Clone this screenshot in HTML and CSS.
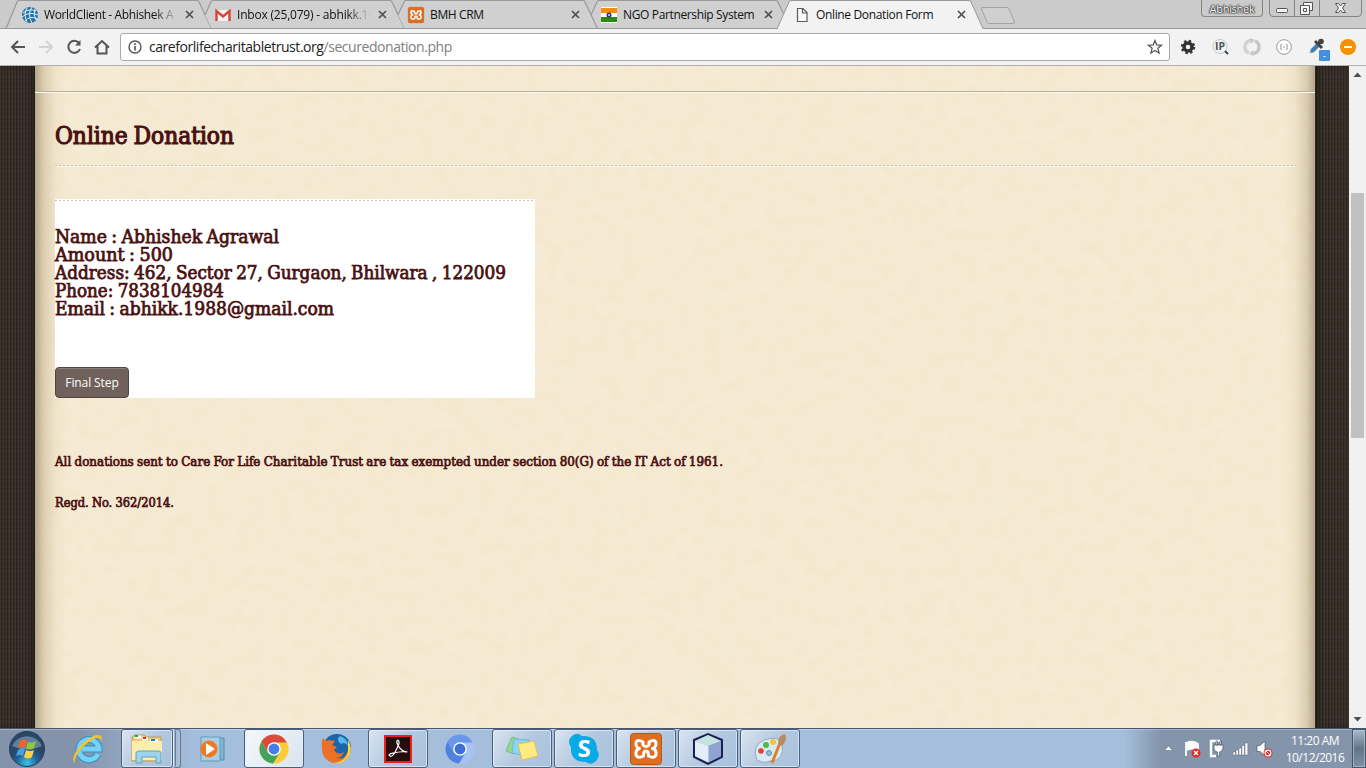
FILE: index.html
```html
<!DOCTYPE html>
<html lang="en">
<head>
<meta charset="utf-8">
<title>Online Donation Form</title>
<link rel="stylesheet" href="styles.css">
</head>
<body>
<div class="screen">
<header class="tabstrip">
  <svg class="tab-shapes" width="1366" height="29" viewBox="0 0 1366 29">
    <rect width="1366" height="29" fill="#cbcbcb"/>
    <g fill="#d0d0d0" stroke="#999" stroke-width="1.2">
      <path d="M591.500 14L597.500.5H777.500L784.500 14L778 28.500H598Z" stroke="none"/>
      <path d="M5.500 28.500Q7 27 8 24L17 2Q18 .5 19 .5H197Q198 .5 199 2L211.500 28.500"/>
      <path d="M205 15L211 2Q212 .5 213 .5H390Q391 .5 392 2L404.500 28.500H211.500"/>
      <path d="M398 15L404 2Q405 .5 406 .5H583Q584 .5 585 2L597.500 28.500H404.500"/>
      <path d="M591 15L597 2Q598 .5 599 .5H776Q777 .5 778 2L784 15" fill="none"/>
    </g>
    <path d="M0 28.500H778M983 28.500H1366" stroke="#999"/>
    <path d="M777 29L789 2Q790 .5 791 .5H969Q970 .5 971 2L983 28.500V29" fill="#f2f2f2" stroke="#999"/>
    <path d="M982 7.500H1006Q1008 7.500 1009 9L1014.500 22Q1015 23.500 1013 23.500H990Q988 23.500 987 22L981.500 9Q981 7.500 982 7.500Z" fill="#d0d0d0" stroke="#a2a2a2"/>
  </svg>
  <div class="tab t1">
    <svg width="16" height="16" viewBox="0 0 16 16"><circle cx="8" cy="8" r="8" fill="#2173a8"/><g fill="none" stroke="#e5f2fa"><path d="M1 6Q7 1 14 4M0 10Q7 4 16 8M3 14Q8 8 15 12M5 1Q1 7 5 15M10 0Q5 7 10 16M13 2Q11 8 14 13"/></g></svg>
    <span class="tab-title fade">WorldClient - Abhishek A</span>
    <svg class="close" width="9" height="9" viewBox="0 0 9 9"><path d="M1 1L8 8M8 1L1 8"/></svg>
  </div>
  <div class="tab t2">
    <svg width="16" height="16" viewBox="0 0 16 16"><path d="M1 3H15V14H1Z" fill="#f3f1ef"/><path d="M1.500 14V4L8 9.500L14.500 4V14" fill="none" stroke="#d8443a" stroke-width="2.400"/></svg>
    <span class="tab-title fade">Inbox (25,079) - abhikk.19</span>
    <svg class="close" width="9" height="9" viewBox="0 0 9 9"><path d="M1 1L8 8M8 1L1 8"/></svg>
  </div>
  <div class="tab t3">
    <svg width="16" height="16" viewBox="0 0 32 32"><use href="#xampp"/></svg>
    <span class="tab-title">BMH CRM</span>
    <svg class="close" width="9" height="9" viewBox="0 0 9 9"><path d="M1 1L8 8M8 1L1 8"/></svg>
  </div>
  <div class="tab t4">
    <svg width="16" height="16" viewBox="0 0 16 16"><rect width="16" height="16" fill="#fff"/><rect y="1" width="16" height="5" fill="#f98c0b"/><rect y="10" width="16" height="5" fill="#2c8a12"/><circle cx="8" cy="8" r="1.900" fill="#fff" stroke="#17266e" stroke-width="1.200"/><circle cx="8" cy="8" r=".7" fill="#17266e"/></svg>
    <span class="tab-title">NGO Partnership System</span>
    <svg class="close" width="9" height="9" viewBox="0 0 9 9"><path d="M1 1L8 8M8 1L1 8"/></svg>
  </div>
  <div class="tab t5">
    <svg width="16" height="16" viewBox="0 0 16 16"><path d="M3.500 1.500H9L13 5.500V14.500H3.500ZM8.500 1.500V6H13" fill="#fafafa" stroke="#5a5a5a" stroke-width="1.200"/></svg>
    <span class="tab-title">Online Donation Form</span>
    <svg class="close" width="9" height="9" viewBox="0 0 9 9"><path d="M1 1L8 8M8 1L1 8"/></svg>
  </div>
  <div class="profile">Abhishek</div>
  <svg class="window-buttons" width="94" height="18" viewBox="0 0 94 18"><path d="M.5-3V13Q.5 16.500 4 16.500H89Q92.500 16.500 92.500 13V-3M25.500 0V16M50.500 0V16" fill="none" stroke="#858585"/><g fill="#f5f5f5" stroke="#555"><rect x="7.500" y="8.500" width="11" height="4" rx="1"/><path d="M34.500 2.500H43.500V10.500H34.500Z"/><path d="M31.500 5.500H40.500V14.500H31.500Z"/><path d="M34.500 8.500H37.500V11.500H34.500Z"/><path d="M66.500 3.500H69.500L71.500 6L73.500 3.500H76.500L73.500 8L76.500 12.500H73.500L71.500 10L69.500 12.500H66.500L69.500 8Z"/></g></svg>
</header>
<nav class="toolbar">
  <svg class="nav-icons" width="110" height="20" viewBox="0 0 110 20">
    <g fill="none" stroke="#555" stroke-width="2">
      <path d="M25 10H12M18 4L12 10L18 16"/>
      <path d="M39 10H52M46 4L52 10L46 16" stroke="#d2d2d2"/>
      <path d="M79 6A6 6 0 1 0 80 12"/><path d="M80.500 3V8.500H75Z" fill="#555" stroke="none"/>
      <path d="M95 10.500L102 4L109 10.500M97.500 9V16.500H106.500V9"/>
    </g>
  </svg>
  <div class="address">
    <svg width="14" height="14" viewBox="0 0 14 14"><circle cx="7" cy="7" r="6" fill="none" stroke="#555" stroke-width="1.400"/><path d="M7 6V10.500M7 3.200V4.900" stroke="#555" stroke-width="1.700"/></svg>
    <span class="url">careforlifecharitabletrust.org<span class="path">/securedonation.php</span></span>
    <svg class="star" width="16" height="16" viewBox="0 0 16 16"><path d="M8 1.500L9.800 6L14.500 6.300L10.900 9.300L12.100 14L8 11.400L3.900 14L5.100 9.300L1.500 6.300L6.200 6Z" fill="none" stroke="#5a5a5a" stroke-width="1.300"/></svg>
  </div>
  <svg class="extensions" width="186" height="26" viewBox="0 0 186 26">
    <circle cx="8" cy="11" r="4" fill="none" stroke="#333" stroke-width="3.500"/><circle cx="8" cy="11" r="6.100" fill="none" stroke="#333" stroke-width="2.200" stroke-dasharray="2.400 2.391"/>
    <circle cx="40" cy="10.500" r="7" fill="#f1f4f5" stroke="#bccbd0"/><path d="M45 15L48 18" stroke="#444" stroke-width="2"/><text x="40" y="14" text-anchor="middle" class="ip">IP</text>
    <g fill="none" stroke-width="3.400"><path d="M69 17A6.500 6.500 0 0 1 71 4.500" stroke="#d2d2d2"/><path d="M75 5A6.500 6.500 0 0 1 73 17.500" stroke="#c4c4c4"/></g><path d="M70 2L75 4L71 8ZM74 20L69 18L73 14Z" fill="#c9c9c9"/>
    <circle cx="104" cy="11" r="7.300" fill="#fff" stroke="#999"/><path d="M102 8Q100 8 101 11Q100 14 102 14M106 8Q108 8 107 11Q108 14 106 14" fill="none" stroke="#999"/><path d="M103 11H105" stroke="#999"/>
    <path d="M130 17L131 13L137 7L140 10L134 16Z" fill="#3981ba" stroke="#99aab4"/><path d="M135 5L142 12M138 8L141 5" stroke="#404447" stroke-width="3"/><circle cx="141" cy="5.500" r="2.800" fill="#404447"/>
    <rect x="139" y="14" width="11" height="11" rx="1" fill="#3f91df"/><path d="M143.500 20.500H145.500" stroke="#fff"/>
    <circle cx="168" cy="11" r="8" fill="#f29200"/><path d="M164 11H172" stroke="#fff" stroke-width="2"/>
  </svg>
</nav>
<main class="viewport">
  <div class="weave"></div>
  <section class="paper">
    <svg class="grain" width="1280" height="662"><defs><filter id="fiber" x="0" y="0" width="100%" height="100%"><feTurbulence type="fractalNoise" baseFrequency=".07 .08" numOctaves="5" seed="7"/><feColorMatrix values="0 0 0 0 .90  0 0 0 0 .76  0 0 0 0 .53  1.500 0 0 0 -.57"/></filter></defs><rect width="1280" height="662" filter="url(#fiber)"/></svg>
    <div class="content">
      <div class="rule"></div>
      <h1><svg width="480" height="32"><text x="0" y="25" textLength="179" lengthAdjust="spacingAndGlyphs">Online Donation</text></svg></h1>
      <div class="dashes"></div>
      <div class="card">
        <div class="dashes"></div>
        <svg class="details" width="480" height="100">
          <text x="0" y="18" textLength="224" lengthAdjust="spacingAndGlyphs">Name : Abhishek Agrawal</text>
          <text x="0" y="36" textLength="118" lengthAdjust="spacingAndGlyphs">Amount : 500</text>
          <text x="0" y="54" textLength="451" lengthAdjust="spacingAndGlyphs">Address: 462, Sector 27, Gurgaon, Bhilwara , 122009</text>
          <text x="0" y="72" textLength="169" lengthAdjust="spacingAndGlyphs">Phone: 7838104984</text>
          <text x="0" y="90" textLength="279" lengthAdjust="spacingAndGlyphs">Email : abhikk.1988@gmail.com</text>
        </svg>
        <button class="final">Final Step</button>
      </div>
      <svg class="notes" width="700" height="64">
        <text x="0" y="16" textLength="668" lengthAdjust="spacingAndGlyphs">All donations sent to Care For Life Charitable Trust are tax exempted under section 80(G) of the IT Act of 1961.</text>
        <text x="0" y="57" textLength="119" lengthAdjust="spacingAndGlyphs">Regd. No. 362/2014.</text>
      </svg>
    </div>
  </section>
  <div class="weave"></div>
  <aside class="scrollbar"><svg width="17" height="17"><path d="M4.500 11L8.500 6.500L12.500 11Z" fill="#505050"/></svg><div class="thumb"></div><svg width="17" height="17"><path d="M4.500 6L8.500 10.500L12.500 6Z" fill="#505050"/></svg></aside>
</main>
<footer class="taskbar">
  <div class="slot start"><svg width="38" height="38" viewBox="0 0 38 38"><defs><radialGradient id="orb" cy=".9"><stop offset="0" stop-color="#39c7ee"/><stop offset=".6" stop-color="#1f6296"/><stop offset="1" stop-color="#294767"/></radialGradient></defs><circle cx="19" cy="19" r="17.500" fill="url(#orb)" stroke="#273f5b"/><path d="M4 16A16 15 0 0 1 34 16Q19 23 4 16Z" fill="#bfd4e5" opacity=".4"/><path d="M12 11Q16 8 19 11L17 18Q14 16 10 18Z" fill="#f0632c"/><path d="M20 12Q24 14 28 11L26 18Q22 21 18 18Z" fill="#92c744"/><path d="M10 20Q14 17 17 19L15 26Q12 24 8 26Z" fill="#4c9fe0"/><path d="M18 20Q22 22 26 20L24 27Q20 30 16 27Z" fill="#ffd044"/></svg></div>
  <div class="slot ie"><svg width="32" height="32" viewBox="0 0 32 32"><path d="M26 21A10 10 0 1 1 27 16H10" fill="none" stroke="#348fc8" stroke-width="7"/><path d="M26 21A10 10 0 1 1 27 16H10" fill="none" stroke="#75d4f6" stroke-width="5"/><path d="M3 30C-4 25 13 4 25 2Q32 1 29 9Q29 4 24 5C14 8 1 24 3 30Z" fill="#f5c52d"/></svg></div>
  <div class="slot btn explorer"><svg width="34" height="32" viewBox="0 0 34 32"><path d="M2 4L5 2H14L16 4H31V28H2Z" fill="#eccb78" stroke="#c59c4f"/><path d="M2 8H32V27H2Z" fill="#faedad"/><path d="M5 4H11M12 6H18M20 8H28" stroke="#fff" stroke-width="3"/><path d="M5 3H8" stroke="#15a84b" stroke-width="2"/><path d="M13 5H16" stroke="#d63a21" stroke-width="2"/><path d="M21 7H25" stroke="#1983cf" stroke-width="2"/><path d="M6 30V20Q6 18 9 18H28Q31 18 31 20V30H26V24H12V30Z" fill="#9bd4ed" stroke="#60a3c5"/></svg></div>
  <div class="stack"></div>
  <div class="slot wmp"><svg width="32" height="32" viewBox="0 0 32 32"><path d="M9 5H27V27H9Z" fill="#83b4d4" stroke="#4e8fb3"/><path d="M4 4H23V28H4Z" fill="#a9cee2" stroke="#5f9dbf"/><circle cx="12" cy="16" r="8.500" fill="#f57821"/><path d="M9 10V22L18 16Z" fill="#fff"/></svg></div>
  <div class="slot btn bright"><svg width="30" height="30" viewBox="0 0 32 32"><circle cx="16" cy="16" r="15.500" fill="#ffcc37"/><path d="M16 .5A15.500 15.500 0 0 0 2.600 8.200L9.500 20L16 9H29.500A15.500 15.500 0 0 0 16 .5Z" fill="#dc4a3d"/><path d="M2.600 8.200A15.500 15.500 0 0 0 15 31.500L22 20L9.500 20Z" fill="#43a35c"/><circle cx="16" cy="16" r="7.300" fill="#fff"/><circle cx="16" cy="16" r="5.800" fill="#447fe8"/></svg></div>
  <div class="slot firefox"><svg width="32" height="32" viewBox="0 0 32 32"><circle cx="17" cy="15" r="14" fill="#1967a9"/><path d="M20 3Q27 5 28 13Q25 8 21 11Q15 6 20 3Z" fill="#56b9e8"/><path d="M3 5Q5 9 9 7L15 8L12 12L17 14L14 17Q18 23 24 19Q21 27 15 24Q24 29 28 18Q30 12 28 7Q33 15 29 23Q23 32 13 30Q1 26 2 14Q1 9 3 5Z" fill="#ed7026"/><path d="M28 7Q33 15 29 23Q23 32 13 30Q26 29 28 18Z" fill="#ffd33c"/></svg></div>
  <div class="slot btn"><svg width="28" height="28" viewBox="0 0 28 28"><rect x="1" y="1" width="26" height="26" fill="#250d0d" stroke="#f21e12" stroke-width="2"/><path d="M6 21C2 19 12 17 21 16.500C27 17 17 19 13 8C12 3 17 5 14 11Q9 23 6 21Z" fill="none" stroke="#fff" stroke-width="1.200"/></svg></div>
  <div class="slot chromium"><svg width="30" height="30" viewBox="0 0 32 32"><circle cx="16" cy="16" r="15.500" fill="#a7c3f6"/><path d="M16 .5A15.500 15.500 0 0 0 2.600 8.200L9.500 20L16 9H29.500A15.500 15.500 0 0 0 16 .5Z" fill="#6897ed"/><path d="M2.600 8.200A15.500 15.500 0 0 0 15 31.500L22 20L9.500 20Z" fill="#5081df"/><circle cx="16" cy="16" r="7.300" fill="#fff"/><circle cx="16" cy="16" r="5.800" fill="#3d70d5"/></svg></div>
  <div class="slot btn"><svg width="34" height="30" viewBox="0 0 34 30"><path d="M7 3L16 6L9 20L1 17Z" fill="#94d795" stroke="#72bd7d"/><path d="M9 5L24 6L22 22L7 19Z" fill="#8cd4f4" stroke="#73b6d3"/><path d="M13 10L29 7L33 22L17 26Z" fill="#ffeb82" stroke="#dac45b"/></svg></div>
  <div class="slot btn"><svg width="32" height="32" viewBox="0 0 32 32"><path d="M3 4Q8-2 14 3Q29 2 29 17Q33 23 28 28Q23 33 18 29Q2 29 3 14Q-1 9 3 4Z" fill="#08a9e7"/><text x="16" y="24" text-anchor="middle" class="skype">S</text></svg></div>
  <div class="slot btn"><svg width="32" height="32" viewBox="0 0 32 32"><g id="xampp"><rect x=".5" y=".5" width="31" height="31" rx="3" fill="#df6d1f" stroke="#b9541a"/><path d="M13 12V9Q7 5.500 6 10Q5.500 14.500 9.500 15.500Q5 17 6 22Q8 26 13.500 23L14 19Q16 17 18 19L18.500 23Q24 26 26 22Q27 17 22.500 15.500Q26.500 14.500 26 10Q25 5.500 19 9V12Q16 15 13 12Z" fill="none" stroke="#fff" stroke-width="3" stroke-linejoin="round"/></g></svg></div>
  <div class="slot btn"><svg width="32" height="32" viewBox="0 0 32 32"><path d="M2 7L16 1L30 7V24L16 31L2 24Z" fill="#9eacd7" stroke="#1b214f" stroke-width="2"/><path d="M3 8L16 2L29 8L16 13Z" fill="#c4e4df"/><path d="M16 13L29 8V23L16 29Z" fill="#8fa2d4"/><path d="M3 8L16 13V29L3 23Z" fill="#e4eef8"/><path d="M16 13V29" fill="none" stroke="#dfe9f7"/></svg></div>
  <div class="slot btn"><svg width="32" height="32" viewBox="0 0 32 32"><path d="M3 27Q-3 13 10 7Q25 2 28 11Q31 28 16 28Q10 31 3 27Z" fill="#d9eaf5" stroke="#8dabc0"/><g><circle cx="7" cy="18" r="2.800" fill="#e43e33"/><circle cx="12" cy="12" r="3" fill="#52b743"/><circle cx="19" cy="9" r="3" fill="#f3c441"/><circle cx="15" cy="20" r="2.500" fill="#90c1db" stroke="#668da5"/></g><path d="M18 30L26 10" stroke="#df7f2c" stroke-width="3"/><path d="M24 11Q24 2 31 1Q34 7 28 13Z" fill="#b68d62"/></svg></div>
  <div class="tray">
    <svg class="tray-icons" width="106" height="22" viewBox="0 0 106 22">
      <path d="M1.500 12.500L5.500 8L9.500 12.500Z" fill="#fff" stroke="#596a7c" stroke-width=".5"/>
      <path d="M23 4V18M24 5Q29 2 35 6V12Q29 9 24 12" fill="#fff" stroke="#fff" stroke-width="1.800"/><circle cx="33" cy="15" r="4.500" fill="#e32921"/><path d="M31 13L35 17M35 13L31 17" stroke="#fff" stroke-width="1.500"/>
      <path d="M56 4V3H48V18H53" fill="none" stroke="#fff" stroke-width="2.400"/><path d="M51 7H60V10Q59 14 56.500 14V18H54.500V14Q51 14 51 10ZM53 3H54.500V7H53ZM57 3H58.500V7H57Z" fill="#fff" stroke="#465563" stroke-width=".7"/>
      <path d="M70 14H72.500V17H70ZM73 12H75.500V17H73ZM76 10H78.500V17H76ZM79 7.500H81.500V17H79ZM82 5H84.800V17H82Z" fill="#fff" stroke="#465563" stroke-width=".4"/>
      <path d="M94 7.500H97L102 3V18L97 13.500H94Z" fill="#fff" stroke="#465563" stroke-width=".7"/><circle cx="105" cy="15" r="4.500" fill="#e32921"/><circle cx="105" cy="15" r="2.900" fill="none" stroke="#fff" stroke-width="1.200"/><path d="M103 13L107 17" stroke="#fff"/>
    </svg>
    <div class="clock"><span>11:20 AM</span><span>10/12/2016</span></div>
    <div class="show-desktop"></div>
  </div>
</footer>
</div>
</body>
</html>
```
FILE: styles.css
```css
* { box-sizing: border-box; }
body { margin: 0; overflow: hidden; font-family: "Open Sans", "Noto Sans", sans-serif; }
svg { display: block; flex: none; overflow: visible; }
.screen { width: 1366px; height: 768px; display: flex; flex-direction: column; }

.tabstrip { position: relative; height: 29px; display: flex; flex: none; background: #cbcbcb; padding-left: 22px; }
.tab-shapes { position: absolute; left: 0; top: 0; overflow: hidden; }
.tab { position: relative; width: 193px; height: 29px; display: flex; align-items: center; gap: 6px; flex: none; }
.tab-title { width: 134px; font-size: 12px; letter-spacing: -.36px; line-height: 18px; color: #111; white-space: nowrap; overflow: hidden; }
.close { margin-left: .5px; stroke: #505050; stroke-width: 1.7; }
.fade { -webkit-mask-image: linear-gradient(90deg, #000 82%, transparent 100%); mask-image: linear-gradient(90deg, #000 82%, transparent 100%); }
.t2 .tab-title { letter-spacing: -.2px; }
.profile { position: relative; width: 62px; height: 17px; margin-left: 214px; border: 1px solid #888; border-top: 0; border-radius: 0 0 4px 4px; font-size: 11px; letter-spacing: -.3px; line-height: 17px; text-align: center; color: #fff; text-shadow: 0 0 1px #222, 0 0 1px #222, 0 0 2px #333, 0 0 2px #333; flex: none; }
.window-buttons { position: relative; margin-left: 6px; overflow: hidden; }

.toolbar { height: 37px; flex: none; display: flex; align-items: flex-start; background: #f2f2f2; border-bottom: 1px solid #b1b1b1; padding-top: 4px; }
.nav-icons { margin-top: 4px; }
.address { margin-left: 10px; width: 1050px; height: 28px; display: flex; align-items: center; border: 1px solid #a9a9a9; border-radius: 3px; background: #fff; padding: 0 7px; }
.url { margin-left: 7px; font-size: 14px; letter-spacing: -.45px; line-height: 20px; color: #222; white-space: nowrap; }
.path { color: #808080; }
.star { margin-left: auto; margin-right: -1px; }
.extensions { margin: 3px 0 0 10px; }
.ip { font: bold 10.5px "Open Sans", sans-serif; fill: #555; }

.viewport { height: 662px; flex: none; display: flex; overflow: hidden; }
.weave { width: 35px; flex: none; background: repeating-linear-gradient(0deg, #0000 0 3px, #05050512 3px 5px), repeating-linear-gradient(90deg, #403630 0 1px, #2b2420 1px 2px, #39302a 2px 3px); box-shadow: inset -4px 0 5px #0004; }
.paper + .weave { width: 34px; box-shadow: inset 4px 0 5px #0004; }
.paper { position: relative; width: 1280px; height: 662px; background: #f5ead4; overflow: hidden; }
.grain { position: absolute; left: 0; top: 0; opacity: .5; }
.content { position: relative; height: 100%; display: flex; flex-direction: column; padding: 0 20px; background: linear-gradient(90deg, #80714c88 0, #97855a45 9px, #b5a16f18 20px, #b5a16f00 32px calc(100% - 32px), #b5a16f18 calc(100% - 20px), #97855a45 calc(100% - 9px), #80714c88 100%); }
.rule { height: 2px; margin: 25px -20px 0; background: linear-gradient(#b7ad98 50%, #fffaf0 50%); flex: none; }
h1 { margin: 26px 0 20px; height: 26px; font: normal 23.5px "DejaVu Serif Condensed", "DejaVu Serif", serif; }
h1 text, .details text, .notes text { fill: #4a1010; stroke: #4a1010; font-family: "DejaVu Serif Condensed", "DejaVu Serif", serif; font-stretch: condensed; word-spacing: -1px; }
h1 text { stroke-width: 1.1px; }
.dashes { height: 2px; flex: none; background: repeating-linear-gradient(90deg, #cbc5b7 0 2px, transparent 2px 4px) top / 100% 1px no-repeat; border-bottom: 1px solid #fff8; }
.content > .dashes { width: 1241px; }
.card { margin-top: 32px; width: 480px; height: 199px; padding-top: 1px; background: #fff; display: flex; flex-direction: column; flex: none; }
.details { margin-top: 23px; }
.details text { font-size: 18.7px; stroke-width: .75px; }
.final { width: 74px; height: 31px; margin-top: auto; padding: 0; border: 1px solid #51443f; border-radius: 4px; background: #6f615b; box-shadow: inset 0 1px #8a7c75; color: #fff; font: 12px "Open Sans", sans-serif; letter-spacing: -.1px; }
.notes { margin-top: 52px; }
.notes text { font-size: 13.2px; stroke-width: .7px; word-spacing: -.5px; }

.scrollbar { width: 17px; background: #f1f1f1; display: flex; flex-direction: column; flex: none; }
.thumb { width: 13px; height: 245px; margin: 110px 2px auto; background: #c1c1c1; }

.taskbar { height: 40px; flex: none; display: flex; align-items: center; border-top: 1px solid #46566e; background: linear-gradient(#fff4 0 1px, transparent 1px), linear-gradient(90deg, #8493aa 0 75px, #a5bedc 195px 1125px, #8495ab 1160px); }
.slot { width: 58px; height: 39px; margin-right: 4px; display: flex; align-items: center; justify-content: center; flex: none; }
.btn { width: 60px; margin: 0 3px 0 -1px; border: 1px solid #4a6079; border-radius: 3px; background: linear-gradient(125deg, #dae4f0, #b4c9e0 50%, #a9c1dd); box-shadow: inset 0 0 0 1px #e9f2fbaa; }
.bright { background: linear-gradient(125deg, #f5f8fb, #d9e3ef); }
.start { width: 54px; margin: 0; }
.ie { width: 68px; margin: 0; }
.explorer { width: 52px; margin: 0 0 0 -1px; }
.stack { width: 8px; height: 39px; border: 1px solid #637b97; border-left-color: #dce8f4; border-radius: 3px; box-shadow: inset -4px 0 #a9bed6, inset -5px 0 #637b97; }
.wmp { width: 64px; margin: 0; }
.tray { margin-left: auto; display: flex; align-items: center; color: #fff; }
.tray-icons { margin-right: 13px; }
.clock { width: 66px; display: flex; flex-direction: column; align-items: center; font-size: 12px; letter-spacing: -.5px; line-height: 17px; margin-right: 4px; }
.show-desktop { width: 14px; height: 39px; border: 1px solid #45556a; box-shadow: inset 0 0 0 1px #c7d2dd88; background: linear-gradient(#a9b8ca, #63758a 50%, #7d90a7); }
.skype { font: bold 24px "Open Sans", sans-serif; fill: #fff; }
```
